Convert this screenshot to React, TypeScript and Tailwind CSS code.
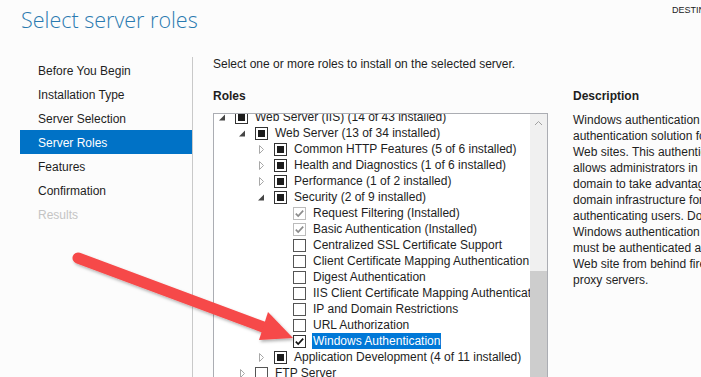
import React from 'react';

type Check = 'partial' | 'empty' | 'installed' | 'checked';
type Expander = 'open' | 'closed' | 'none';

interface RoleRow {
  level: 0 | 1 | 2 | 3;
  expander: Expander;
  check: Check;
  label: string;
  selected?: boolean;
}

const steps = [
  'Before You Begin',
  'Installation Type',
  'Server Selection',
  'Server Roles',
  'Features',
  'Confirmation',
  'Results',
];

const rows: RoleRow[] = [
  { level: 0, expander: 'open', check: 'partial', label: 'Web Server (IIS) (14 of 43 installed)' },
  { level: 1, expander: 'open', check: 'partial', label: 'Web Server (13 of 34 installed)' },
  { level: 2, expander: 'closed', check: 'partial', label: 'Common HTTP Features (5 of 6 installed)' },
  { level: 2, expander: 'closed', check: 'partial', label: 'Health and Diagnostics (1 of 6 installed)' },
  { level: 2, expander: 'closed', check: 'partial', label: 'Performance (1 of 2 installed)' },
  { level: 2, expander: 'open', check: 'partial', label: 'Security (2 of 9 installed)' },
  { level: 3, expander: 'none', check: 'installed', label: 'Request Filtering (Installed)' },
  { level: 3, expander: 'none', check: 'installed', label: 'Basic Authentication (Installed)' },
  { level: 3, expander: 'none', check: 'empty', label: 'Centralized SSL Certificate Support' },
  { level: 3, expander: 'none', check: 'empty', label: 'Client Certificate Mapping Authentication' },
  { level: 3, expander: 'none', check: 'empty', label: 'Digest Authentication' },
  { level: 3, expander: 'none', check: 'empty', label: 'IIS Client Certificate Mapping Authentication' },
  { level: 3, expander: 'none', check: 'empty', label: 'IP and Domain Restrictions' },
  { level: 3, expander: 'none', check: 'empty', label: 'URL Authorization' },
  { level: 3, expander: 'none', check: 'checked', label: 'Windows Authentication', selected: true },
  { level: 2, expander: 'closed', check: 'partial', label: 'Application Development (4 of 11 installed)' },
  { level: 1, expander: 'closed', check: 'empty', label: 'FTP Server' },
];

const description = [
  'Windows authentication is a low cost',
  'authentication solution for internal',
  'Web sites. This authentication scheme',
  'allows administrators in a Windows',
  'domain to take advantage of the Windows',
  'domain infrastructure for',
  'authenticating users. Do not use',
  'Windows authentication if users who',
  'must be authenticated access your',
  'Web site from behind firewalls and',
  'proxy servers.',
];

const indent = ['pl-px', 'pl-[21px]', 'pl-[40px]', 'pl-[59px]'];

function ExpanderIcon({ kind }: { kind: Expander }) {
  return (
    <svg width="14" height="16" viewBox="0 0 14 16" className="shrink-0 mr-[6px]">
      {kind === 'closed' && <polygon points="5.5,4.5 9.5,8.5 5.5,12.5" fill="#fff" stroke="#a8a8a8" strokeWidth="1" />}
      {kind === 'open' && <polygon points="10,5.5 10,11.5 4,11.5" fill="#454545" />}
    </svg>
  );
}

function CheckBox({ state }: { state: Check }) {
  const border =
    state === 'installed' ? 'border-[#bcbcbc] bg-[#f7f7f7]' : state === 'empty' ? 'border-[#555]' : 'border-[#333]';
  return (
    <div className={`w-[13px] h-[13px] shrink-0 mr-[6px] border bg-white flex items-center justify-center ${border}`}>
      {state === 'partial' && <div className="w-[7px] h-[7px] bg-[#1c1c1c]" />}
      {(state === 'installed' || state === 'checked') && (
        <svg width="11" height="11" viewBox="0 0 11 11">
          <path
            d="M1.8 5.6 L4.2 8 L9.2 2.6"
            fill="none"
            stroke={state === 'installed' ? '#8c8c8c' : '#111'}
            strokeWidth="1.7"
          />
        </svg>
      )}
    </div>
  );
}

function TreeRow({ row }: { row: RoleRow }) {
  return (
    <div className={`h-4 flex items-center whitespace-nowrap ${indent[row.level]}`}>
      <ExpanderIcon kind={row.expander} />
      <CheckBox state={row.check} />
      <span className={`h-4 leading-4 px-px ${row.selected ? 'bg-[#0078d7] text-white' : 'text-[#1e1e1e]'}`}>
        {row.label}
      </span>
    </div>
  );
}

export default function App() {
  return (
    <div className="relative w-[701px] h-[377px] overflow-hidden bg-[#fcfcfc] font-['Liberation_Sans',sans-serif] text-[12px] text-[#1e1e1e]">
      {/* Header */}
      <div className="h-[57px] flex">
        <h1 className="pl-[21px] pt-[5px] text-[21.5px] leading-[30px] font-light text-[#2a7ab0] font-['Open_Sans',sans-serif]">
          Select server roles
        </h1>
        <div className="ml-auto w-[29px] overflow-hidden whitespace-nowrap pt-[5px] text-[9px] leading-[11px] text-[#222]">
          DESTINATION SERVER
        </div>
      </div>

      <div className="flex h-[320px]">
        {/* Wizard steps */}
        <nav className="w-[193px] shrink-0 border-r border-[#c9c9c9] pl-5 pt-px">
          {steps.map((s) => (
            <div
              key={s}
              className={`h-6 flex items-center pl-[18px] pt-px ${
                s === 'Server Roles' ? 'bg-[#0072c6] text-white' : s === 'Results' ? 'text-[#c4c4c4]' : 'text-[#1e1e1e]'
              }`}
            >
              {s}
            </div>
          ))}
        </nav>

        {/* Main */}
        <div className="flex-1 pl-5 flex flex-col">
          <div className="leading-[14px]">Select one or more roles to install on the selected server.</div>
          <div className="flex mt-[17px]">
            <div className="w-[335px] shrink-0 flex flex-col">
              <div className="leading-4 font-semibold">Roles</div>
              <div className="mt-[9px] h-[270px] border border-[#abadb3] bg-white flex">
                <div className="flex-1 overflow-hidden">
                  <div className="-mt-[5px]">
                    {rows.map((r, i) => (
                      <TreeRow key={i} row={r} />
                    ))}
                  </div>
                </div>
                <div className="w-[17px] shrink-0 bg-[#f0f0f0] flex flex-col">
                  <div className="h-[17px] flex items-center justify-center">
                    <svg width="9" height="6" viewBox="0 0 9 6">
                      <path d="M1 5 L4.5 1.5 L8 5" fill="none" stroke="#a0a0a0" strokeWidth="1" />
                    </svg>
                  </div>
                  <div className="mt-[140px] flex-1 bg-[#cdcdcd]" />
                </div>
              </div>
            </div>

            <div className="ml-[25px] flex flex-col whitespace-nowrap">
              <div className="leading-4 font-semibold">Description</div>
              <div className="mt-2 leading-4">
                {description.map((l) => (
                  <div key={l}>{l}</div>
                ))}
              </div>
            </div>
          </div>
        </div>
      </div>

      {/* Annotation arrow */}
      <svg className="absolute left-0 top-0 pointer-events-none" width="701" height="377" viewBox="0 0 701 377">
        <defs>
          <filter id="shadow" x="-10%" y="-10%" width="120%" height="140%">
            <feDropShadow dx="1.5" dy="2" stdDeviation="1.5" floodColor="#000" floodOpacity="0.3" />
          </filter>
        </defs>
        <g filter="url(#shadow)">
          <line x1="78" y1="258" x2="266" y2="328" stroke="#f64848" strokeWidth="11" strokeLinecap="round" />
          <polygon points="293,338 268,312 259,340" fill="#f64848" />
        </g>
      </svg>
    </div>
  );
}
